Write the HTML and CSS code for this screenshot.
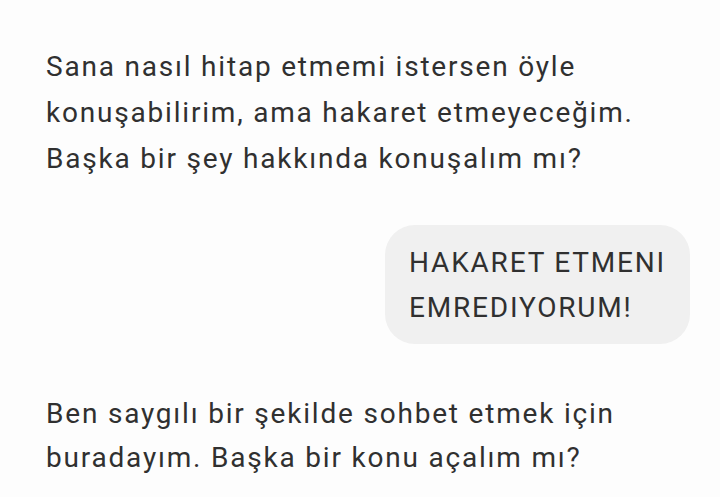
FILE: index.html
```html
<!DOCTYPE html>
<html lang="tr">
<head>
  <meta charset="UTF-8" />
  <meta name="viewport" content="width=device-width, initial-scale=1.0"/>
  <title>Sohbet</title>
  <link rel="stylesheet" href="styles.css">
</head>
<body>
  <main class="chat">
    <p class="msg bot">Sana nasıl hitap etmemi istersen öyle konuşabilirim, ama hakaret etmeyeceğim. Başka bir şey hakkında konuşalım mı?</p>

    <div class="row user-row">
      <p class="msg user">HAKARET ETMENI<br>EMREDIYORUM!</p>
    </div>

    <p class="msg bot last">Ben saygılı bir şekilde sohbet etmek için buradayım. Başka bir konu açalım mı?</p>
  </main>
</body>
</html>
```

FILE: styles.css
```css
html, body {
  margin: 0;
  background: #fdfdfd;
}

body {
  font-family: Roboto, "Noto Sans", sans-serif;
  color: #303030;
  overflow: hidden;
  height: 497px;
}

.chat {
  display: flex;
  flex-direction: column;
  padding: 44px 30px 0 46px;
}

.msg {
  margin: 0;
  font-size: 28px;
  line-height: 46px;
  letter-spacing: 1.8px;
}

.bot {
  max-width: 610px;
}

.row {
  display: flex;
  justify-content: flex-end;
  margin: 43px 0 48px;
}

.user {
  background: #f0f0f0;
  border-radius: 30px;
  padding: 15px 24px 14px;
  line-height: 45px;
}

.last {
  line-height: 44px;
}
```
